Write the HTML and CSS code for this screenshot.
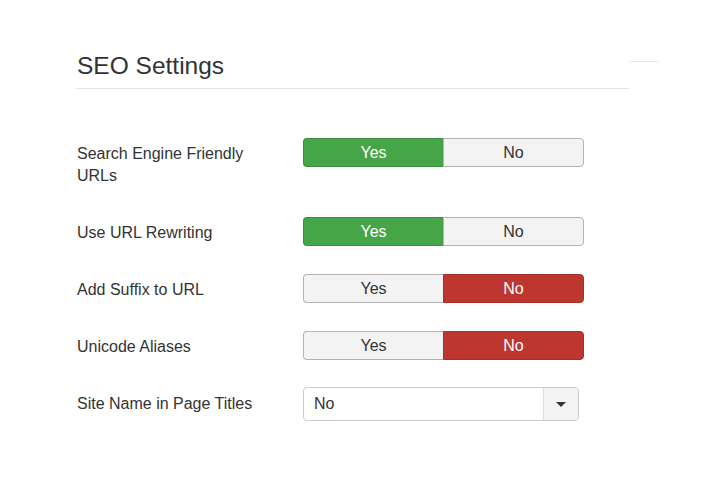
FILE: index.html
```html
<!DOCTYPE html>
<html>
<head>
  <title>SEO Settings</title>
  <link rel="stylesheet" href="styles.css">
</head>
<body>
  <div class="page">
    <div class="main-col">
      <h2 class="legend">SEO Settings</h2>

      <div class="control-group">
        <div class="control-label">Search Engine Friendly URLs</div>
        <div class="btn-group">
          <span class="btn btn-yes active">Yes</span>
          <span class="btn">No</span>
        </div>
      </div>

      <div class="control-group">
        <div class="control-label">Use URL Rewriting</div>
        <div class="btn-group">
          <span class="btn btn-yes active">Yes</span>
          <span class="btn">No</span>
        </div>
      </div>

      <div class="control-group">
        <div class="control-label">Add Suffix to URL</div>
        <div class="btn-group">
          <span class="btn">Yes</span>
          <span class="btn btn-no active">No</span>
        </div>
      </div>

      <div class="control-group">
        <div class="control-label">Unicode Aliases</div>
        <div class="btn-group">
          <span class="btn">Yes</span>
          <span class="btn btn-no active">No</span>
        </div>
      </div>

      <div class="control-group select-group">
        <div class="control-label">Site Name in Page Titles</div>
        <div class="chzn-single">
          <span class="chzn-text">No</span>
          <span class="chzn-arrow"><b></b></span>
        </div>
      </div>
    </div>
    <div class="side-col">
      <div class="side-rule"></div>
    </div>
  </div>
</body>
</html>
```

FILE: styles.css
```css
body {
  margin: 0;
  font-family: "Liberation Sans", Arial, sans-serif;
  font-size: 16px;
  color: #333333;
  background-color: #ffffff;
}

.page {
  display: flex;
  padding: 0 0 0 76px;
}

.main-col {
  width: 553px;
}

.side-col {
  width: 28px;
  margin-left: 1px;
  padding-top: 61px;
}

.side-rule {
  border-top: 1px solid #e5e5e5;
}

.legend {
  margin: 0 0 49px 0;
  padding: 52px 0 9px 1px;
  font-size: 24.5px;
  font-weight: normal;
  line-height: 27px;
  border-bottom: 1px solid #e5e5e5;
}

.control-group {
  display: flex;
  align-items: flex-start;
  margin-bottom: 28px;
}

.control-label {
  width: 180px;
  margin-right: 46px;
  padding: 5px 0 2px 1px;
  line-height: 22px;
}

.select-group {
  margin-top: -1px;
  align-items: center;
}

.select-group .control-label {
  padding: 0 0 0 1px;
}

.btn-group {
  display: flex;
  width: 281px;
}

.btn {
  flex: 1;
  height: 27px;
  line-height: 27px;
  text-align: center;
  background-color: #f3f3f3;
  border: 1px solid #b3b3b3;
  color: #333333;
}

.btn:first-child {
  border-radius: 4px 0 0 4px;
  border-right: none;
}

.btn:last-child {
  border-radius: 0 4px 4px 0;
}

.btn-yes.active {
  background-color: #46a546;
  border-color: #3b8f3b;
  color: #ffffff;
}

.btn-no.active {
  background-color: #bd362f;
  border-color: #a52f29;
  color: #ffffff;
}

.chzn-single {
  display: flex;
  width: 274px;
  height: 32px;
  border: 1px solid #cccccc;
  border-radius: 4px;
  background-color: #ffffff;
}

.chzn-text {
  flex: 1;
  padding-left: 10px;
  line-height: 32px;
}

.chzn-arrow {
  width: 34px;
  border-left: 1px solid #dddddd;
  background-color: #f3f3f3;
  border-radius: 0 4px 4px 0;
  display: flex;
  align-items: center;
  justify-content: center;
}

.chzn-arrow b {
  width: 0;
  height: 0;
  border-left: 5px solid transparent;
  border-right: 5px solid transparent;
  border-top: 5px solid #333333;
}
```
